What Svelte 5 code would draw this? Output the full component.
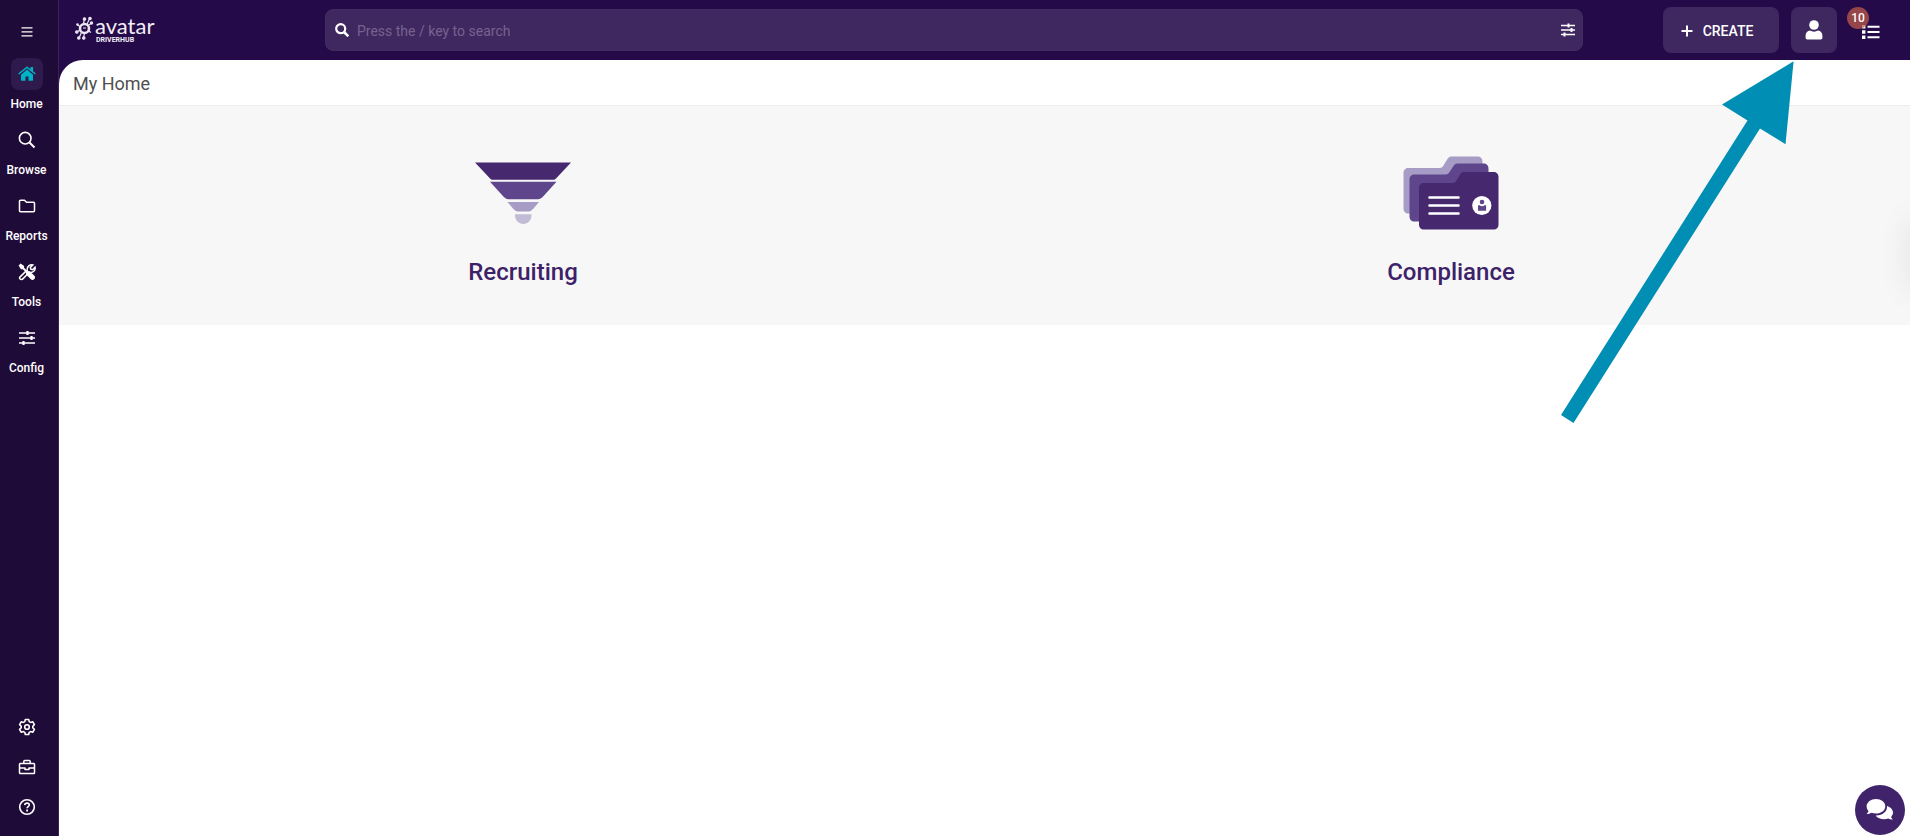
<script>
  const nav = [
    { id: 'home', label: 'Home' },
    { id: 'browse', label: 'Browse' },
    { id: 'reports', label: 'Reports' },
    { id: 'tools', label: 'Tools' },
    { id: 'config', label: 'Config' }
  ];
  let query = $state('');
</script>

<div class="app">
  <aside class="sidebar">
    <button class="menu" aria-label="Toggle menu">
      <svg width="12" height="12" viewBox="0 0 12 12" stroke="#fff" stroke-width="1.3"><path d="M.5 1.8h11M.5 5.8h11M.5 9.8h11" /></svg>
    </button>
    <nav aria-label="Main">
      {#each nav as item (item.id)}
        <a href="#{item.id}" class:active={item.id === 'home'}>
          <span class="tile">
            {#if item.id === 'home'}
              <svg width="18" height="16" viewBox="0 0 18 16" fill="#00b3c4">
                <path d="M9 3.600 3 8.700v5.500c0 .3.2.5.5.5h4v-4.200h3v4.200h4c.3 0 .5-.2.5-.5V8.700z" />
                <path d="M12.600 1h2.500v4.200l2.700 2.300-.9 1.100L9 2.200 1.100 8.600.2 7.500 8.200.9c.5-.4 1.100-.4 1.600 0l2.800 2.300z" />
              </svg>
            {:else if item.id === 'browse'}
              <svg width="18" height="18" viewBox="0 0 18 18" fill="none" stroke="#fff"><circle cx="7.200" cy="7.200" r="5.800" stroke-width="1.600" /><path d="m11.500 11.500 5 5" stroke-width="2" /></svg>
            {:else if item.id === 'reports'}
              <svg width="18" height="14" viewBox="0 0 18 14" fill="none" stroke="#fff" stroke-width="1.500" stroke-linejoin="round"><path d="M1.500 2.200c0-.6.400-1 1-1h4l2 2h7c.6 0 1 .4 1 1v7.600c0 .6-.4 1-1 1h-13c-.6 0-1-.4-1-1z" /></svg>
            {:else if item.id === 'tools'}
              <svg width="18" height="18" viewBox="0 0 18 18" fill="none">
                <path d="M2.100 13.900 8 8.200l1.300-.7c-.4-2 .2-3.500 1.500-4.600 1.200-1 2.700-1.300 4-1l-2.500 2.500.5 1.800 1.800.5 2.400-2.400c.4 1.500-.1 3-1.200 4-1.200 1.100-2.800 1.500-4.500 1L4.800 15.900c-.7.7-1.900.9-2.700.1-.6-.6-.6-1.500 0-2.100z" stroke="#fff" stroke-width="1.500" />
                <path d="m.6 2.600 2-2L6.100 2.900v1.900l3.400 3.400c1-.3 2-.1 2.800.6l4.300 4.300c1.700 1.800-1.600 5.100-3.500 3.500l-4.300-4.300c-.8-.8-1-1.800-.7-2.800L4.800 6.200H2.900z" fill="#fff" />
              </svg>
            {:else}
              <svg width="18" height="16" viewBox="0 0 18 16" stroke="#fff"><path d="M1 3h16M1 8h16M1 13h16" stroke-width="1.400" /><path d="M9.500 1v4M13.500 6v4M5.500 11v4" stroke-width="2.200" /></svg>
            {/if}
          </span>
          <span class="label">{item.label}</span>
        </a>
      {/each}
    </nav>
    <div class="utilities">
      <button aria-label="Settings">
        <svg width="18" height="18" viewBox="0 0 18 18" fill="none" stroke="#fff" stroke-width="1.600" stroke-linejoin="round">
          <path d="m7.300 1.500h3.400l.5 2.100 1.400.8 2.100-.7 1.700 2.900-1.600 1.600v1.600l1.600 1.600-1.700 2.900-2.100-.7-1.400.8-.5 2.100H7.300l-.5-2.100-1.400-.8-2.100.7-1.700-2.900 1.600-1.600V8.200L1.600 6.600l1.700-2.900 2.100.7 1.400-.8z" />
          <circle cx="9" cy="9" r="2.300" />
        </svg>
      </button>
      <button aria-label="Work items">
        <svg width="18" height="16" viewBox="0 0 18 16" fill="none" stroke="#fff" stroke-width="1.500" stroke-linejoin="round"><path d="M2.300 4.500h13.400c.5 0 .8.300.8.800v8.400c0 .5-.3.800-.8.800H2.300c-.5 0-.8-.3-.8-.8V5.300c0-.5.3-.8.800-.8zM5.800 4.500v-2c0-.6.400-1 1-1h4.400c.6 0 1 .4 1 1v2M1.500 9H7v1.500h4V9h5.500" /></svg>
      </button>
      <button aria-label="Help">
        <svg width="18" height="18" viewBox="0 0 18 18" fill="none" stroke="#fff" stroke-width="1.600"><circle cx="9" cy="9" r="7.300" /><path d="M6.700 7.100c.1-1.300 1-2 2.300-2s2.300.8 2.300 1.900c0 1.500-2.200 1.600-2.200 3.200" /><path d="M8.200 12.500h1.800" stroke-width="1.800" /></svg>
      </button>
    </div>
  </aside>

  <div class="main">
    <header>
      <a class="logo" href="#home" aria-label="avatar DRIVERHUB">
        <svg width="22" height="26" viewBox="0 0 22 26" fill="#e9e5ef" stroke="#e9e5ef">
          <circle cx="9.500" cy="12.500" r="4.500" fill="none" stroke-width="2.600" />
          <g stroke-width="1.200">
            <path d="M8.500 7.500 9.500 3M12 8l3-6M13 9.500l3-2M5 10.500l-3-2M5 14l-3 2M6.500 16.500 4 22M9.500 17l-1 5M13 14.500l3 2M8 12h3" />
            <circle cx="9.500" cy="3" r="1.200" /><circle cx="15" cy="2.500" r="1.200" /><circle cx="16.500" cy="7" r="1.100" /><circle cx="2.500" cy="8.500" r=".7" /><circle cx="1.800" cy="16" r="1.200" /><circle cx="3.800" cy="22" r="1.200" /><circle cx="8.800" cy="22" r="1.200" />
          </g>
        </svg>
        <span class="wordmark"><span class="brand">avatar</span><span class="product">DRIVERHUB</span></span>
      </a>
      <div class="search">
        <label for="search" aria-label="Search">
          <svg width="14" height="14" viewBox="0 0 14 14" fill="none" stroke="#fff"><circle cx="5.700" cy="5.700" r="4.500" stroke-width="2.200" /><path d="m9 9 4.300 4.300" stroke-width="2.500" /></svg>
        </label>
        <input id="search" type="text" placeholder="Press the / key to search" bind:value={query} />
        <button aria-label="Search filters">
          <svg width="14" height="14" viewBox="0 0 14 14" stroke="#fff"><path d="M0 2.500h14M0 7h14M0 11.500h14" stroke-width="1.600" /><path d="M7.500.5v4M10.500 5v4M3.500 9.500v4" stroke-width="2" /></svg>
        </button>
      </div>
      <div class="actions">
        <button class="box create">
          <svg width="12" height="12" viewBox="0 0 12 12" stroke="#fff" stroke-width="2"><path d="M.5 6h11M6 .5v11" /></svg>
          <span>CREATE</span>
        </button>
        <button class="box user" aria-label="Account">
          <svg width="18" height="20" viewBox="0 0 18 20" fill="#fff"><circle cx="9" cy="5" r="4.800" /><path d="M5 10.600c2.500 1.400 5.500 1.400 8 0 2.800.3 4.400 2.400 4.400 5.200v2c0 1-.7 1.700-1.700 1.700H2.300c-1 0-1.700-.7-1.700-1.700v-2c0-2.800 1.600-4.900 4.400-5.200z" /></svg>
        </button>
        <button class="tasks" aria-label="Tasks, 10 open">
          <svg width="18" height="16" viewBox="0 0 18 16" fill="#fff"><path d="M0 1h3.400v3.400H0zM0 6.300h3.400v3.400H0zM0 11.600h3.400V15H0zM5.500 1.700h12v2h-12zM5.500 7h12v2h-12zM5.500 12.300h12v2h-12z" /></svg>
          <span class="badge">10</span>
        </button>
      </div>
    </header>

    <main>
      <h1>My Home</h1>
      <section class="cards">
        <a class="card" href="#recruiting">
          <svg width="98" height="76" viewBox="0 0 98 76">
            <path d="M1 6.500h96L82 22.500c-1 1-1.500 1.200-2.500 1.200h-61c-1 0-1.500-.2-2.500-1.200z" fill="#46286f" />
            <path d="M16 25.700h66.500L70.500 39c-2.800 3.200-4.200 4.300-6.500 4.300H34.500c-2.300 0-3.700-1.100-6.500-4.300z" fill="#5f468c" />
            <path d="M33.500 46h31.500l-5.500 6.500c-2.200 2.500-3.500 3-6 3h-8.500c-2.500 0-3.800-.5-6-3z" fill="#a79cc6" />
            <path d="M41 58.300h16.500v1c0 5-3.700 8.700-8.200 8.700S41 64.300 41 59.300z" fill="#c1bbd5" />
          </svg>
          <span>Recruiting</span>
        </a>
        <a class="card" href="#compliance">
          <svg width="98" height="76" viewBox="0 0 98 76">
            <path d="M6.500 12h31c2 0 3-.8 4-2.500l3-5C45.700 2.300 47 .5 49.500.5h26c3 0 5 2 5 5v45c0 5-2 7-6 7h-68c-3 0-5-2-5-5V17c0-3 2-5 5-5z" fill="#a79cc6" />
            <path d="M12.500 18.500h31c2 0 3-.8 4-2.500l3-4.500c1.200-2.200 2.500-4 5-4h26c3 0 5 2 5 5v47c0 4-2 6-5 6h-69c-3 0-5-2-5-5v-37c0-3 2-5 5-5z" fill="#5f468c" />
            <path d="M22 27h28.500c2 0 3-.8 4-2.500l3-5c1.200-2.200 2.500-3.500 5-3.500H91.500c3 0 5 2 5 5v47.500c0 3-2 5-5 5H22c-3 0-5-2-5-5V32c0-3 2-5 5-5z" fill="#46286f" />
            <path d="M27.500 41.500h29M27.500 49.500h29M27.500 57.500h29" stroke="#fff" stroke-width="2.600" stroke-linecap="round" />
            <circle cx="79.800" cy="49.500" r="9.600" fill="#fff" />
            <circle cx="80" cy="46" r="2.300" fill="#5f468c" />
            <path d="M76 49.300h1.600c1.300 1.400 3.700 1.400 5 0h1.500v5.500H76z" fill="#5f468c" />
          </svg>
          <span>Compliance</span>
        </a>
      </section>
    </main>
  </div>

  <div class="edge" aria-hidden="true"></div>
  <svg class="pointer" width="234" height="364" viewBox="0 0 234 364" aria-hidden="true">
    <path d="m233.600 1.300-71.600 43.200 25.500 16L1 355l12.500 8L200 68.500l25.500 15.700z" fill="#008eb4" />
  </svg>
  <button class="chat" aria-label="Open chat">
    <svg width="28" height="24" viewBox="0 0 28 24" fill="#fff">
      <path d="M21 8c3.500 1 6 3.600 6 6.600 0 1.700-.7 3.100-1.900 4.300.3 1 .9 1.800 1.700 2.500-1.500.3-3-.1-4.500-.8-4.900 1.600-10.300.2-12.700-3.200C16 17.700 21.500 14 21 8z" />
      <path d="M10 1c5 0 9.300 3 9.300 7.200s-4.200 7.300-9.300 7.300c-1.600 0-3.100-.3-4.500-.8C4 15.500 2.500 16 .7 16c.9-.9 1.500-1.900 1.800-3C1.300 11.700.6 10 .6 8.300.6 4.100 5 1 10 1z" />
    </svg>
  </button>
</div>

<style>
  :global(body) { background: #fff; }
  .app {
    position: relative;
    display: flex;
    min-height: 100vh;
    overflow: hidden;
    background: #250a4a;
    color: #fff;
    font-family: Roboto, "Liberation Sans", sans-serif;
  }
  button { border: 0; padding: 0; background: none; color: inherit; font: inherit; cursor: pointer; }
  a { color: inherit; text-decoration: none; }
  svg { display: block; flex: none; }

  .sidebar {
    flex: none;
    display: flex;
    flex-direction: column;
    box-sizing: border-box;
    width: 59px;
    padding-right: 5px;
    border-right: 1px solid #3a235c;
    background: #1f0b37;
  }
  .menu { display: grid; place-items: center; height: 58px; padding-top: 6px; box-sizing: border-box; }
  nav { display: flex; flex-direction: column; gap: 12px; }
  nav a { display: flex; flex-direction: column; align-items: center; gap: 6px; }
  .tile { display: grid; place-items: center; width: 32px; height: 32px; border-radius: 8px; }
  .active .tile { background: #2f1a4e; }
  .label { font-size: 12px; line-height: 16px; font-weight: 500; }
  .utilities { margin-top: auto; padding-bottom: 9px; display: flex; flex-direction: column; }
  .utilities button { display: grid; place-items: center; height: 40px; }

  .main { flex: 1; min-width: 0; display: flex; flex-direction: column; }
  header { display: flex; align-items: center; box-sizing: border-box; height: 60px; }
  .logo { flex: none; box-sizing: border-box; display: flex; width: 266px; padding-left: 16px; color: #f1eef5; }
  .wordmark { display: flex; flex-direction: column; margin-left: -2px; }
  .brand { font: 22px/20px Lato, sans-serif; }
  .product { font-size: 7px; line-height: 8px; font-weight: 700; padding-left: 1px; }
  .search {
    flex: 1;
    display: flex;
    align-items: center;
    box-sizing: border-box;
    height: 42px;
    padding: 0 7px 0 9px;
    border: 1px solid #422d63;
    border-radius: 8px;
    background: #3f2860;
  }
  .search input {
    flex: 1;
    min-width: 0;
    margin-left: 8px;
    padding: 1px 0 0;
    border: 0;
    outline: 0;
    background: none;
    color: #fff;
    font: 14px/20px Roboto, "Liberation Sans", sans-serif;
  }
  .search input::placeholder { color: #77628f; opacity: 1; }
  .actions { flex: none; display: flex; align-items: center; gap: 12px; margin-left: 80px; padding-right: 30px; }
  .box {
    display: flex;
    align-items: center;
    justify-content: center;
    height: 46px;
    border-radius: 8px;
    background: #3f2860;
  }
  .create { width: 116px; padding: 2px 8px 0 0; gap: 10px; font-size: 14px; font-weight: 500; line-height: 20px; }
  .user { width: 46px; }
  .tasks { position: relative; margin-left: 13px; padding-top: 4px; }
  .badge {
    position: absolute;
    left: -15px;
    top: -13px;
    width: 22px;
    height: 22px;
    border-radius: 50%;
    background: rgba(188, 91, 72, 0.75);
    font-size: 12px;
    line-height: 22px;
    font-weight: 500;
    text-align: center;
  }

  main { flex: 1; border-top-left-radius: 24px; background: #fff; overflow: hidden; }
  h1 { margin: 0; padding: 13px 14px 10px; font-size: 18px; line-height: 22px; font-weight: 400; color: #4f4f4f; }
  .cards {
    display: grid;
    grid-template-columns: 1fr 1fr;
    gap: 10px;
    padding: 50px 0 37px 5px;
    border-top: 1px solid #ececec;
    background: #f7f7f7;
  }
  .card { display: flex; flex-direction: column; align-items: center; gap: 24px; color: #3d2169; font-size: 24px; line-height: 32px; font-weight: 500; }

  .edge { position: absolute; right: -20px; top: 220px; width: 20px; height: 70px; box-shadow: 0 0 32px rgba(0, 0, 0, 0.1); }
  .pointer { position: absolute; right: 116px; top: 60px; pointer-events: none; }
  .chat {
    position: absolute;
    right: 5px;
    bottom: 1px;
    display: grid;
    place-items: center;
    width: 50px;
    height: 50px;
    border-radius: 50%;
    background: #40236b;
  }
</style>
